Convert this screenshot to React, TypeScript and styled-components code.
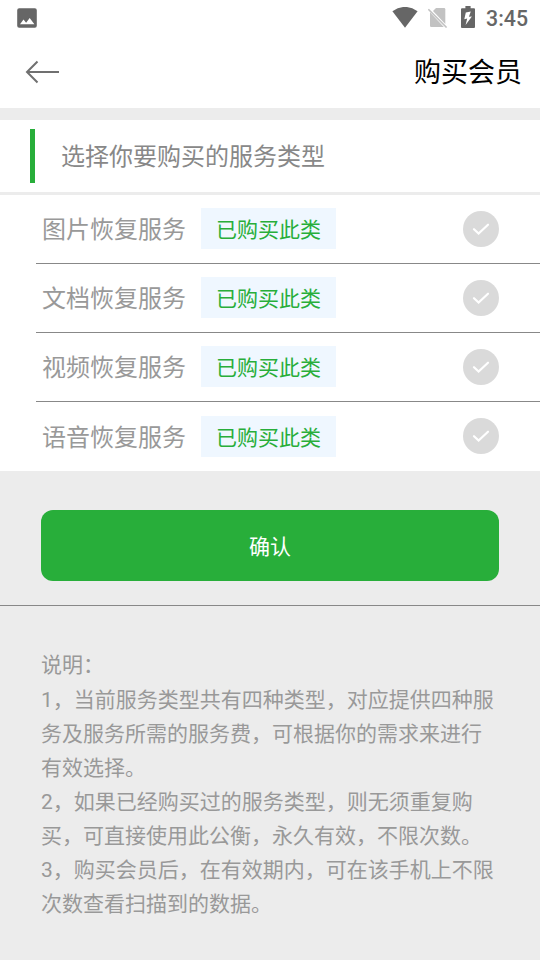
import React from "react";
import styled, { createGlobalStyle } from "styled-components";

const GlobalStyle = createGlobalStyle`
  * { box-sizing: border-box; }
  body {
    margin: 0;
    background: #ececec;
    font-family: Roboto, "Noto Sans CJK SC", sans-serif;
  }
`;

const Screen = styled.div`
  width: 540px;
  height: 960px;
  overflow: hidden;
  background: #ececec;
`;

const StatusBar = styled.div`
  height: 36px;
  padding: 0 12px 0 17px;
  display: flex;
  align-items: center;
  justify-content: space-between;
  background: #fff;
`;

const StatusIcons = styled.div`
  display: flex;
  align-items: flex-start;
  height: 36px;
`;

const Glyph = styled.svg<{ $gap?: number; $top?: number }>`
  display: block;
  flex: none;
  margin-top: ${(p) => p.$top ?? 0}px;
  margin-right: ${(p) => p.$gap ?? 0}px;
`;

const Clock = styled.span`
  font-size: 21.3px;
  font-weight: 500;
  line-height: 36px;
  color: #666;
  padding-top: 1px;
`;

const TitleBar = styled.header`
  height: 72px;
  padding: 0 18px 0 25px;
  display: flex;
  align-items: center;
  justify-content: space-between;
  background: #fff;
`;

const Title = styled.h1`
  margin: 0;
  padding-top: 2px;
  font-size: 27px;
  font-weight: 400;
  line-height: 40px;
  color: #000;
`;

const Heading = styled.div`
  height: 72px;
  margin: 12px 0 3px;
  padding-left: 30px;
  display: flex;
  align-items: center;
  background: #fff;
`;

const Accent = styled.span`
  width: 5px;
  height: 54px;
  margin-right: 26px;
  background: #28ae3a;
`;

const HeadingText = styled.span`
  padding-top: 2px;
  font-size: 24px;
  line-height: 36px;
  color: #888;
`;

const List = styled.div`
  height: 276px;
  padding-left: 36px;
  background: #fff;
`;

const Row = styled.div`
  height: 69px;
  padding: 13px 41px 0 6px;
  display: flex;
  align-items: flex-start;
  border-bottom: 1px solid #888;
  &:last-child {
    border-bottom: 0;
    padding-top: 14px;
  }
`;

const RowLabel = styled.span`
  width: 159px;
  font-size: 24px;
  line-height: 45px;
  color: #999;
`;

const Badge = styled.span`
  width: 135px;
  height: 41px;
  text-align: center;
  font-size: 21px;
  line-height: 44px;
  color: #28ae3a;
  background: #eff7ff;
`;

const Check = styled.svg<{ $top: number }>`
  display: block;
  margin-left: auto;
  margin-top: ${(p) => p.$top}px;
`;

const Actions = styled.div`
  height: 135px;
  padding: 39px 41px 0;
  border-bottom: 1px solid #888;
`;

const Confirm = styled.button`
  display: block;
  width: 100%;
  height: 71px;
  padding: 0 0 2px;
  border: 0;
  border-radius: 12px;
  font: inherit;
  font-size: 21px;
  color: #fff;
  background: #28ae3a;
`;

const Notes = styled.div`
  padding: 42px 0 0 41px;
  font-size: 21px;
  line-height: 34px;
  color: #999;
  white-space: nowrap;
`;

const NotesTitle = styled.div`
  height: 35px;
`;

const services = ["图片恢复服务", "文档恢复服务", "视频恢复服务", "语音恢复服务"];

const notes = [
  "1，当前服务类型共有四种类型，对应提供四种服",
  "务及服务所需的服务费，可根据你的需求来进行",
  "有效选择。",
  "2，如果已经购买过的服务类型，则无须重复购",
  "买，可直接使用此公衡，永久有效，不限次数。",
  "3，购买会员后，在有效期内，可在该手机上不限",
  "次数查看扫描到的数据。",
];

export default function App() {
  return (
    <Screen>
      <GlobalStyle />
      <StatusBar>
        <Glyph width="20" height="20" viewBox="0 0 20 20">
          <path
            fill="#666"
            fillRule="evenodd"
            d="M2.2 0.2h15.6a2 2 0 0 1 2 2v15.6a2 2 0 0 1-2 2H2.2a2 2 0 0 1-2-2V2.2a2 2 0 0 1 2-2zM3 16.3h14.4L12.7 10l-3.6 4.8-2.6-3.2z"
          />
        </Glyph>
        <StatusIcons>
          <Glyph width="26" height="21" viewBox="0 0 26 21" $gap={10} $top={7}>
            <path fill="#666" d="M0.4 4.2Q13-4.4 25.6 4.2L13 20.8z" />
          </Glyph>
          <Glyph width="20" height="21" viewBox="0 0 20 21" $gap={13} $top={7}>
            <path fill="#c2c2c2" d="M8 1h8a1.300 1.300 0 0 1 1.300 1.300v14.700L5 4z" />
            <path fill="#c2c2c2" d="M2 5.200V18.700a1.300 1.300 0 0 0 1.300 1.300h12.500z" />
            <path stroke="#c2c2c2" strokeWidth="1.600" d="M0.400 2.200l18.200 18.300" />
          </Glyph>
          <Glyph width="14" height="22" viewBox="0 0 14 22" $gap={11} $top={6}>
            <path
              fill="#666"
              fillRule="evenodd"
              d="M4.400 0h5.200v2.200h3.400a1 1 0 0 1 1 1v17.800a1 1 0 0 1-1 1H1a1 1 0 0 1-1-1V3.200a1 1 0 0 1 1-1h3.400zM9.800 5.600L4.800 6.600 3.300 13.200l2.900-.6L4.600 18.900l6.300-8.500-3 .4z"
            />
          </Glyph>
          <Clock>3:45</Clock>
        </StatusIcons>
      </StatusBar>
      <TitleBar>
        <Glyph width="35" height="24" viewBox="0 0 35 24" fill="none" stroke="#707070" strokeWidth="2">
          <path d="M12.500 1.500L2 12l10.500 10.500M2 12h32" />
        </Glyph>
        <Title>购买会员</Title>
      </TitleBar>
      <Heading>
        <Accent />
        <HeadingText>选择你要购买的服务类型</HeadingText>
      </Heading>
      <List>
        {services.map((name, i) => (
          <Row key={name}>
            <RowLabel>{name}</RowLabel>
            <Badge>已购买此类</Badge>
            <Check width="36" height="36" viewBox="0 0 36 36" $top={i === 3 ? 2 : 3}>
              <circle cx="18" cy="18" r="18" fill="#dadada" />
              <path
                d="M11 18.200l4.600 4.300L25 13.700"
                fill="none"
                stroke="#fff"
                strokeWidth="2.200"
                strokeLinecap="round"
              />
            </Check>
          </Row>
        ))}
      </List>
      <Actions>
        <Confirm>确认</Confirm>
      </Actions>
      <Notes>
        <NotesTitle>说明：</NotesTitle>
        {notes.map((line) => (
          <div key={line}>{line}</div>
        ))}
      </Notes>
    </Screen>
  );
}
